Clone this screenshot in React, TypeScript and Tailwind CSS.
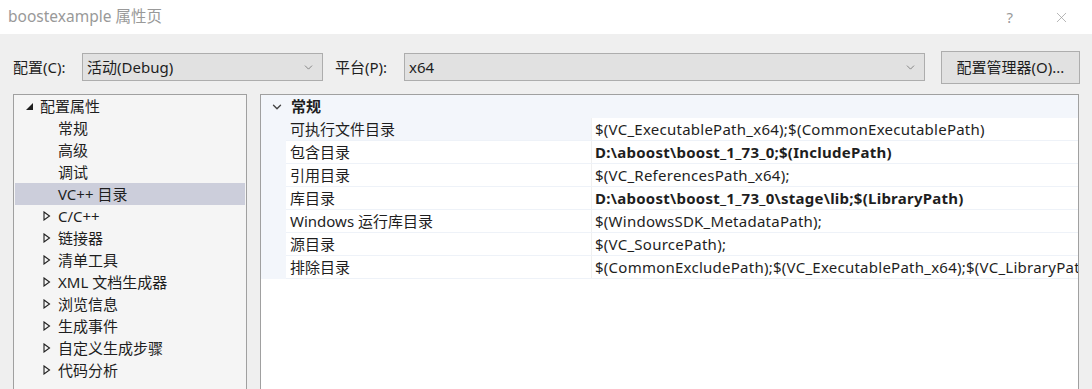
import { ChevronDown, X } from "lucide-react"

const font = { fontFamily: '"Noto Sans", "Noto Sans CJK SC", sans-serif' }

const treeItems = [
  { label: "常规", kind: "leaf" },
  { label: "高级", kind: "leaf" },
  { label: "调试", kind: "leaf" },
  { label: "VC++ 目录", kind: "leaf", selected: true },
  { label: "C/C++", kind: "node" },
  { label: "链接器", kind: "node" },
  { label: "清单工具", kind: "node" },
  { label: "XML 文档生成器", kind: "node" },
  { label: "浏览信息", kind: "node" },
  { label: "生成事件", kind: "node" },
  { label: "自定义生成步骤", kind: "node" },
  { label: "代码分析", kind: "node" },
]

const props = [
  { name: "可执行文件目录", value: "$(VC_ExecutablePath_x64);$(CommonExecutablePath)", focus: true },
  { name: "包含目录", value: "D:\\aboost\\boost_1_73_0;$(IncludePath)", bold: true },
  { name: "引用目录", value: "$(VC_ReferencesPath_x64);" },
  { name: "库目录", value: "D:\\aboost\\boost_1_73_0\\stage\\lib;$(LibraryPath)", bold: true },
  { name: "Windows 运行库目录", value: "$(WindowsSDK_MetadataPath);" },
  { name: "源目录", value: "$(VC_SourcePath);" },
  { name: "排除目录", value: "$(CommonExcludePath);$(VC_ExecutablePath_x64);$(VC_LibraryPath_x64);" },
]

function SelectBox({ value, width }: { value: string; width: string }) {
  return (
    <div className={`${width} h-[28px] flex items-center justify-between bg-[#e1e1e1] border border-[#adadad] pl-[4px] pr-[7px]`}>
      <span>{value}</span>
      <ChevronDown size={13} strokeWidth={1.2} className="text-[#555]" />
    </div>
  )
}

function Triangle({ open }: { open?: boolean }) {
  if (open) {
    return (
      <svg width="9" height="9" viewBox="0 0 9 9">
        <path d="M8 1 L8 8 L1 8 Z" fill="#1e1e1e" />
      </svg>
    )
  }
  return (
    <svg width="8" height="10" viewBox="0 0 8 10">
      <path d="M1 1 L6.5 5 L1 9 Z" fill="none" stroke="#1e1e1e" strokeWidth="1.1" />
    </svg>
  )
}

export default function App() {
  return (
    <div className="w-[1092px] h-[389px] overflow-hidden bg-[#efefef] text-[15px] text-[#1e1e1e]" style={font}>
      {/* title bar */}
      <div className="h-[34px] bg-white flex items-center justify-between pl-[8px] pr-[22px]">
        <span className="text-[15.5px] text-[#999]">boostexample 属性页</span>
        <div className="flex items-center gap-[40px] text-[#999]">
          <span className="text-[15px]">?</span>
          <X size={17} strokeWidth={1} />
        </div>
      </div>

      {/* config row */}
      <div className="flex items-center h-[28px] mt-[19px] pl-[13px]">
        <span className="w-[69px]">配置(C):</span>
        <SelectBox value="活动(Debug)" width="w-[241px]" />
        <span className="ml-[12px] w-[69px]">平台(P):</span>
        <SelectBox value="x64" width="w-[521px]" />
        <div className="ml-[16px] w-[139px] h-[33px] shrink-0 flex items-center justify-center bg-[#e1e1e1] border border-[#adadad]">
          配置管理器(O)...
        </div>
      </div>

      {/* panels */}
      <div className="flex pl-[13px] pt-[13px] gap-[13px]">
        <div className="w-[234px] h-[320px] border border-[#a0a0a0] bg-[#f5f5f5] px-[1px]">
          <div className="h-[22px] flex items-center pl-[10px] gap-[6px]">
            <Triangle open />
            <span>配置属性</span>
          </div>
          {treeItems.map((it) => (
            <div
              key={it.label}
              className={`h-[22px] flex items-center pl-[28px] gap-[7px] ${it.selected ? "bg-[#cccedb]" : ""}`}
            >
              <span className="w-[8px] flex items-center">{it.kind === "node" ? <Triangle /> : null}</span>
              <span>{it.label}</span>
            </div>
          ))}
        </div>

        <div className="w-[819px] h-[320px] border border-[#a0a0a0] bg-white">
          <div className="flex bg-[#f3f6fb]">
            <div className="w-[25px] shrink-0" />
            <div className="flex-1 min-w-0">
              <div className="h-[23px] flex items-center -ml-[16px] gap-[7px] font-bold">
                <ChevronDown size={14} strokeWidth={2.4} className="text-[#444]" />
                <span>常规</span>
              </div>
              {props.map((p) => (
                <div key={p.name} className="h-[23px] flex border-b border-[#eef2f8]">
                  <div className={`w-[305px] shrink-0 pl-[4px] flex items-center ${p.focus ? "" : "bg-white"}`}>{p.name}</div>
                  <div className="flex-1 min-w-0 bg-white border-l border-[#f0f0f0] pl-[3px] flex items-center whitespace-nowrap overflow-hidden">
                    <span className={`tracking-[0.25px] ${p.bold ? "font-bold" : ""}`}>{p.value}</span>
                  </div>
                </div>
              ))}
            </div>
          </div>
        </div>
      </div>
    </div>
  )
}
